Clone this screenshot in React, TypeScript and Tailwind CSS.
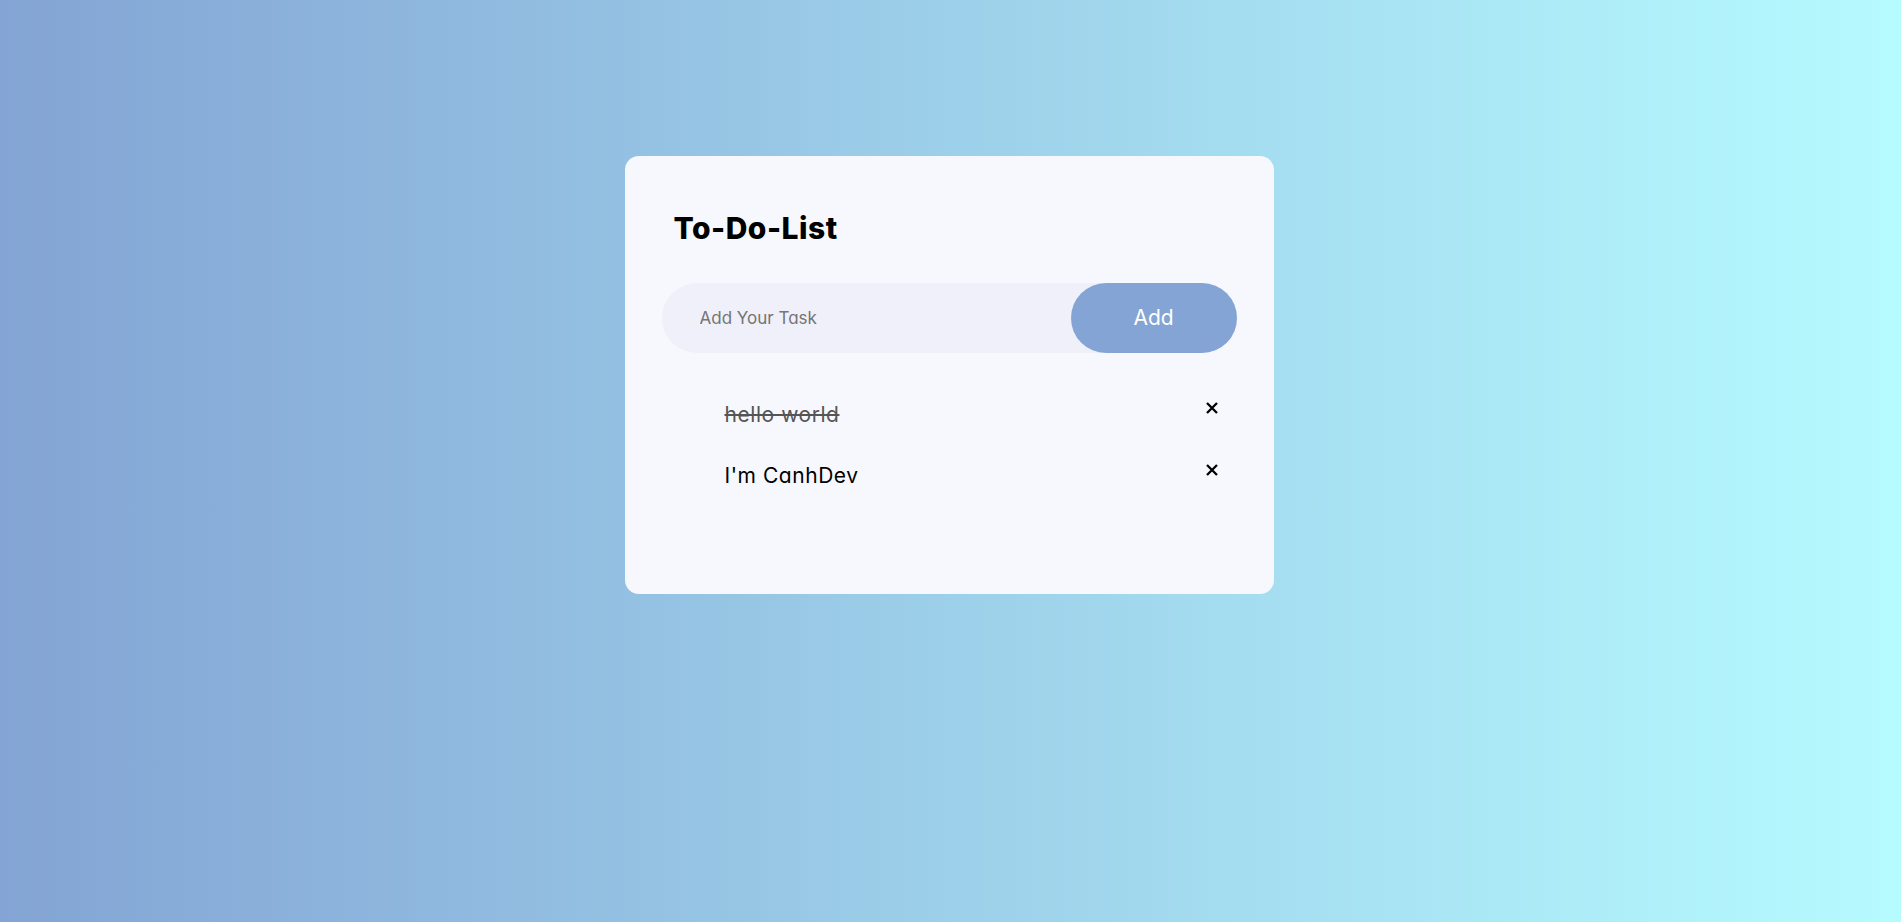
import React from "react";

const font = { fontFamily: "Inter, 'Noto Sans', sans-serif" };

function XIcon() {
  return (
    <svg width="12" height="12" viewBox="0 0 12 12" aria-hidden="true">
      <path d="M1 1 L11 11 M11 1 L1 11" stroke="#000" strokeWidth="2.3" fill="none" />
    </svg>
  );
}

export default function App() {
  const items = [
    { text: "hello world", done: true },
    { text: "I'm CanhDev", done: false },
  ];
  return (
    <div
      className="min-h-screen w-full bg-[linear-gradient(to_right,#83a4d4,#b6fbff)] flex justify-center items-start pr-[3px] [font-feature-settings:'cv11']"
      style={font}
    >
      <div className="mt-[156px] w-[649px] rounded-[14px] bg-[#f7f8fe] px-[37px] pt-[57px] pb-[87.5px]">
        <h2 className="ml-[12px] h-[30px] text-[30px] leading-[30px] font-extrabold tracking-[0.5px] text-black">To-Do-List</h2>
        <div className="mt-[40px] flex h-[70px] items-center rounded-full bg-[#eff0fa]">
          <input
            className="h-full flex-1 bg-transparent pl-[38px] text-[17px] text-black outline-none placeholder:text-[#757575]"
            placeholder="Add Your Task"
          />
          <button className="h-[70px] w-[166px] rounded-full bg-[#83a4d4] text-[21px] text-white">Add</button>
        </div>
        <ul className="mt-[30.5px]">
          {items.map((it) => (
            <li key={it.text} className="relative h-[61.5px] pl-[63px] text-[21px] leading-[61.5px] tracking-[0.55px]">
              <span className={it.done ? "text-[#555] line-through" : "text-black"}>{it.text}</span>
              <span className="absolute right-0 top-0 flex h-[49px] w-[50px] items-center justify-center">
                <XIcon />
              </span>
            </li>
          ))}
        </ul>
      </div>
    </div>
  );
}
